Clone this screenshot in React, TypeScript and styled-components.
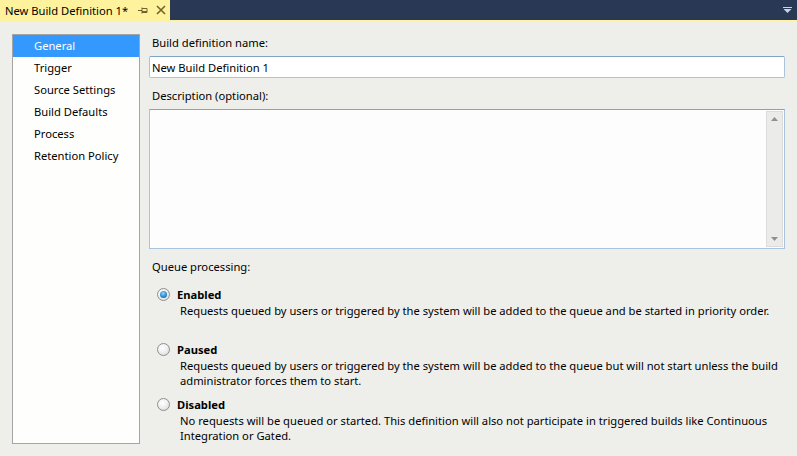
import React, { useState } from 'react';
import styled, { createGlobalStyle } from 'styled-components';

const GlobalStyle = createGlobalStyle`
  html, body {
    margin: 0;
    padding: 0;
    background: #eeefeb;
  }
  body {
    font-family: "Segoe UI", "Noto Sans", "Open Sans", sans-serif;
    font-size: 11.2px;
    color: #000;
  }
`;

const Window = styled.div`
  width: 797px;
  height: 456px;
  display: flex;
  flex-direction: column;
  overflow: hidden;
`;

const TabBar = styled.div`
  height: 20px;
  flex-shrink: 0;
  background: #293955;
  border-bottom: 1px solid #fff29d;
  display: flex;
  align-items: stretch;
  justify-content: space-between;
`;

const Tab = styled.div`
  width: 170px;
  background: #fff29d;
  display: flex;
  align-items: center;
  padding-left: 5px;
  box-sizing: border-box;
  font-size: 11.2px;
  color: #000;
  white-space: nowrap;
`;

const TabTitle = styled.span`
  width: 129px;
`;

const TabIcon = styled.span`
  width: 18px;
  display: flex;
  align-items: center;
  justify-content: center;
`;

const DropButton = styled.div`
  width: 20px;
  display: flex;
  align-items: center;
  justify-content: center;
`;

const Body = styled.div`
  flex: 1;
  display: flex;
  gap: 9px;
  padding: 13px 12px 12px 12px;
`;

const NavList = styled.ul`
  list-style: none;
  margin: 0;
  padding: 0;
  width: 126px;
  flex-shrink: 0;
  height: 408px;
  background: #fefefd;
  border: 1px solid #a5a5a5;
`;

const NavItem = styled.li<{ $active?: boolean }>`
  height: 22px;
  line-height: 22px;
  padding-left: 21px;
  white-space: nowrap;
  background: ${({ $active }) => ($active ? '#3399ff' : 'transparent')};
  color: ${({ $active }) => ($active ? '#fff' : '#000')};
  cursor: default;
`;

const Main = styled.div`
  flex: 1;
  min-width: 0;
  display: flex;
  flex-direction: column;
  & > * {
    flex-shrink: 0;
  }
`;

const FieldLabel = styled.div<{ $top: number }>`
  padding-left: 3px;
  height: 16px;
  line-height: 16px;
  margin-top: ${({ $top }) => $top}px;
  margin-bottom: 5px;
`;

const NameInput = styled.input`
  height: 22px;
  box-sizing: border-box;
  border: 1px solid #a9c4dc;
  border-top-color: #7ea4c6;
  border-radius: 2px;
  padding: 0 2px;
  font: inherit;
  background: #fff;
  outline: none;
`;

const DescBox = styled.div`
  height: 140px;
  box-sizing: border-box;
  border: 1px solid #a9c4dc;
  border-top-color: #7ea4c6;
  background: #fcfdfc;
  display: flex;
  justify-content: flex-end;
  padding: 1px;
`;

const ScrollBar = styled.div`
  width: 15px;
  background: #ebebea;
  border: 1px solid #dcdcdc;
  display: flex;
  flex-direction: column;
  justify-content: space-between;
  align-items: center;
  padding: 5px 0;
`;

const SectionLabel = styled.div`
  padding-left: 3px;
  margin-top: 10px;
  height: 16px;
  line-height: 16px;
  margin-bottom: 12px;
`;

const Options = styled.div`
  display: flex;
  flex-direction: column;
  padding-left: 8px;
`;

const Option = styled.label`
  display: grid;
  grid-template-columns: 20px 1fr;
  grid-template-rows: 16px auto;
  align-content: start;
  height: 55px;
  cursor: default;
`;

const RadioDot = styled.span<{ $checked?: boolean }>`
  width: 13px;
  height: 13px;
  margin-top: 1px;
  border-radius: 50%;
  box-sizing: border-box;
  border: 1px solid #8e8f8f;
  background: radial-gradient(circle at 40% 35%, #ffffff 0%, #f0f0f0 45%, #d4d4d4 100%);
  display: flex;
  align-items: center;
  justify-content: center;
  &::after {
    content: '';
    display: ${({ $checked }) => ($checked ? 'block' : 'none')};
    width: 7px;
    height: 7px;
    border-radius: 50%;
    background: radial-gradient(circle at 45% 35%, #8fd6fa 0%, #2a8bcf 55%, #0d4f8c 100%);
  }
`;

const OptionTitle = styled.div`
  font-weight: bold;
  line-height: 16px;
`;

const OptionDesc = styled.div`
  grid-column: 2;
  padding-left: 3px;
  line-height: 15px;
  white-space: nowrap;
`;

const Pin = () => (
  <svg width="11" height="9" viewBox="0 0 11 9">
    <path d="M0 4.5h4M4 1.5v6M4 2.5h5v4H4M4 5.5h5" stroke="#72632a" strokeWidth="1" fill="none" />
  </svg>
);

const Close = () => (
  <svg width="10" height="10" viewBox="0 0 10 10">
    <path d="M1 1l8 8M9 1l-8 8" stroke="#72632a" strokeWidth="1.6" />
  </svg>
);

const DropArrow = () => (
  <svg width="9" height="6" viewBox="0 0 9 6">
    <path d="M0 0h9v1H0z M0.5 2h8L4.5 6z" fill="#ced4df" />
  </svg>
);

const UpArrow = () => (
  <svg width="7" height="4" viewBox="0 0 7 4">
    <path d="M3.5 0L7 4H0z" fill="#909090" />
  </svg>
);

const DownArrow = () => (
  <svg width="7" height="4" viewBox="0 0 7 4">
    <path d="M0 0h7L3.5 4z" fill="#909090" />
  </svg>
);

const sections = ['General', 'Trigger', 'Source Settings', 'Build Defaults', 'Process', 'Retention Policy'];

const options = [
  {
    key: 'enabled',
    title: 'Enabled',
    lines: ['Requests queued by users or triggered by the system will be added to the queue and be started in priority order.'],
  },
  {
    key: 'paused',
    title: 'Paused',
    lines: [
      'Requests queued by users or triggered by the system will be added to the queue but will not start unless the build',
      'administrator forces them to start.',
    ],
  },
  {
    key: 'disabled',
    title: 'Disabled',
    lines: [
      'No requests will be queued or started. This definition will also not participate in triggered builds like Continuous',
      'Integration or Gated.',
    ],
  },
];

export default function App() {
  const [active, setActive] = useState('General');
  const [name, setName] = useState('New Build Definition 1');
  const [queue, setQueue] = useState('enabled');

  return (
    <Window>
      <GlobalStyle />
      <TabBar>
        <Tab>
          <TabTitle>New Build Definition 1*</TabTitle>
          <TabIcon><Pin /></TabIcon>
          <TabIcon><Close /></TabIcon>
        </Tab>
        <DropButton><DropArrow /></DropButton>
      </TabBar>
      <Body>
        <NavList>
          {sections.map((s) => (
            <NavItem key={s} $active={s === active} onClick={() => setActive(s)}>
              {s}
            </NavItem>
          ))}
        </NavList>
        <Main>
          <FieldLabel $top={1}>Build definition name:</FieldLabel>
          <NameInput value={name} onChange={(e) => setName(e.target.value)} />
          <FieldLabel $top={10}>Description (optional):</FieldLabel>
          <DescBox>
            <ScrollBar>
              <UpArrow />
              <DownArrow />
            </ScrollBar>
          </DescBox>
          <SectionLabel>Queue processing:</SectionLabel>
          <Options>
            {options.map((o) => (
              <Option key={o.key} onClick={() => setQueue(o.key)}>
                <RadioDot $checked={queue === o.key} />
                <OptionTitle>{o.title}</OptionTitle>
                <OptionDesc>
                  {o.lines.map((l) => (
                    <div key={l}>{l}</div>
                  ))}
                </OptionDesc>
              </Option>
            ))}
          </Options>
        </Main>
      </Body>
    </Window>
  );
}
